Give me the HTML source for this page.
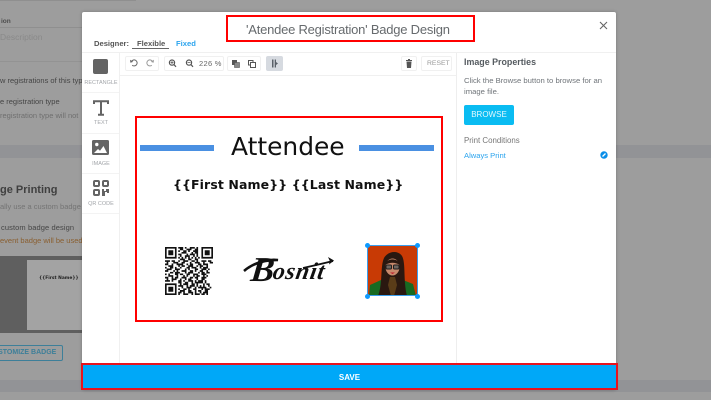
<!DOCTYPE html>
<html><head><meta charset="utf-8">
<style>
*{box-sizing:border-box;margin:0;padding:0}
html,body{width:711px;height:400px;overflow:hidden;background:#9d9d9d;font-family:"Liberation Sans",sans-serif}
.a{position:absolute;white-space:nowrap}
.lbl{font-size:5.5px;color:#a3a6aa;text-align:center;width:38px;left:82px}
.tb{position:absolute;top:56px;height:15px;border:1px solid #f0f0f0;border-radius:2px;background:#fff}
</style></head>
<body>
<div style="position:relative;width:711px;height:400px;overflow:hidden">
<!-- background page -->
<div class="a" style="left:0;top:0;width:136px;height:1px;background:#8f8f8f"></div>
<div class="a" style="left:0;top:27px;width:82px;height:1px;background:#8f8f8f"></div>
<div class="a" style="left:0;top:61px;width:82px;height:1px;background:#939393"></div>
<div class="a" style="left:1px;top:18px;font-size:6.5px;font-weight:bold;color:#4c4c4c">ion</div>
<div class="a" style="left:0;top:32px;font-size:8.5px;color:#8a8a8a">Description</div>
<div class="a" style="left:0;top:76px;font-size:7.5px;color:#454545">w registrations of this type</div>
<div class="a" style="left:0;top:97px;font-size:7.5px;color:#454545">e registration type</div>
<div class="a" style="left:0;top:111px;font-size:7.5px;color:#6f6f6f">registration type will not</div>
<div class="a" style="left:0;top:145px;width:711px;height:13px;background:#929396"></div>
<div class="a" style="left:0;top:380px;width:711px;height:12px;background:#929396"></div>
<div class="a" style="left:0;top:184px;font-size:11px;font-weight:bold;color:#3f3f3f">ge Printing</div>
<div class="a" style="left:0;top:202px;font-size:7.5px;color:#747474">ally use a custom badge</div>
<div class="a" style="left:1px;top:223px;font-size:7.5px;letter-spacing:.1px;color:#454545">custom badge design</div>
<div class="a" style="left:0;top:236px;font-size:7.5px;color:#8a5f30">event badge will be used</div>
<div class="a" style="left:0;top:256px;width:82px;height:77px;background:#5f5f5f"></div>
<div class="a" style="left:27px;top:260px;width:55px;height:70px;background:#a3a3a3"></div>
<div class="a" style="left:39px;top:276px;font:bold 4.4px 'DejaVu Sans',sans-serif;color:#222">{{First Name}}</div>
<div class="a" style="left:-8px;top:345px;width:71px;height:16px;border:1px solid #3d7f99;border-radius:2px"></div>
<div class="a" style="left:-12px;top:349px;color:#3d7f99;font-size:7px;font-weight:bold">CUSTOMIZE BADGE</div>

<!-- modal -->
<div class="a" style="left:82px;top:12px;width:534px;height:378px;background:#fff;border-radius:2px;box-shadow:0 0 3px rgba(0,0,0,.25)"></div>
<div class="a" style="left:82px;top:52px;width:534px;height:1px;background:#f0f0f0"></div>
<svg class="a" style="left:240px;top:18px" width="220" height="22" viewBox="0 0 220 22"><text x="6" y="16" font-family="Liberation Sans, sans-serif" font-size="13" fill="#666a6d" textLength="204" lengthAdjust="spacing">'Atendee Registration' Badge Design</text></svg>
<svg class="a" style="left:599px;top:21px" width="9" height="9" viewBox="0 0 9 9"><path d="M1 1l7 7M8 1L1 8" stroke="#666" stroke-width="1.1"/></svg>
<div class="a" style="left:94px;top:38.5px;font-size:7.6px;font-weight:bold;color:#555">Designer:</div>
<div class="a" style="left:137px;top:38.5px;font-size:7.6px;font-weight:bold;color:#555">Flexible</div>
<div class="a" style="left:132px;top:48px;width:37px;height:1px;background:#666"></div>
<div class="a" style="left:176px;top:38.5px;font-size:7.6px;font-weight:bold;color:#2ba4ee">Fixed</div>

<!-- left tool column -->
<div class="a" style="left:119px;top:53px;width:1px;height:310px;background:#f0f0f0"></div>
<div class="a" style="left:82px;top:92px;width:37px;height:1px;background:#f3f3f3"></div>
<div class="a" style="left:82px;top:133px;width:37px;height:1px;background:#f3f3f3"></div>
<div class="a" style="left:82px;top:173px;width:37px;height:1px;background:#f3f3f3"></div>
<div class="a" style="left:82px;top:213px;width:37px;height:1px;background:#f3f3f3"></div>
<div class="a" style="left:93px;top:59px;width:15px;height:15px;background:#646464;border-radius:2px"></div>
<div class="a lbl" style="top:80px">RECTANGLE</div>
<svg class="a" style="left:93px;top:100px" width="16" height="16" viewBox="0 0 16 16"><path d="M1 4V1.2h14V4M8 1.2V14.5M5 14.8h6" fill="none" stroke="#646464" stroke-width="2"/></svg>
<div class="a lbl" style="top:120px">TEXT</div>
<svg class="a" style="left:92px;top:140px" width="17" height="15" viewBox="0 0 17 15"><rect width="17" height="15" rx="1.5" fill="#646464"/><circle cx="4.8" cy="4.5" r="1.7" fill="#fff"/><path d="M2 13l4-4 2 1.8L11.5 6 15 13z" fill="#fff"/></svg>
<div class="a lbl" style="top:160.5px">IMAGE</div>
<svg class="a" style="left:93px;top:180px" width="16" height="16" viewBox="0 0 16 16"><g fill="none" stroke="#646464" stroke-width="2"><rect x="1" y="1" width="5" height="5" rx="1"/><rect x="10" y="1" width="5" height="5" rx="1"/><rect x="1" y="10" width="5" height="5" rx="1"/></g><path d="M9 9h2v2h2V9h3v4h-2v-1h-2v4H9z" fill="#646464"/></svg>
<div class="a lbl" style="top:200.5px">QR CODE</div>

<!-- toolbar -->
<div class="a" style="left:120px;top:75px;width:336px;height:1px;background:#f0f0f0"></div>
<div class="a" style="left:456px;top:53px;width:1px;height:310px;background:#eee"></div>
<div class="tb" style="left:125px;width:34px"></div>
<div class="tb" style="left:164px;width:60px"></div>
<div class="tb" style="left:227px;width:34px"></div>
<svg class="a" style="left:129px;top:59px" width="26" height="9" viewBox="0 0 26 9"><path d="M2.5 2.5a3 3 0 1 1 .7 3.7" fill="none" stroke="#666" stroke-width="1"/><path d="M1 .8l.4 3 2.8-.9z" fill="#666"/><path d="M23.5 2.5a3 3 0 1 0-.7 3.7" fill="none" stroke="#999" stroke-width="1"/><path d="M25 .8l-.4 3-2.8-.9z" fill="#999"/></svg>
<svg class="a" style="left:168px;top:59px" width="26" height="9" viewBox="0 0 26 9"><g fill="none" stroke="#555" stroke-width="1.2"><circle cx="4" cy="3.6" r="2.6"/><path d="M6 5.6L8 7.8"/><circle cx="21" cy="3.6" r="2.6"/><path d="M23 5.6L25 7.8"/></g><path d="M2.5 3.6h3M4 2.1v3M19.5 3.6h3" stroke="#555" stroke-width=".8"/></svg>
<div class="a" style="left:199px;top:59px;font-size:7.5px;color:#666;letter-spacing:.3px">226 %</div>
<svg class="a" style="left:232px;top:60px" width="24" height="8" viewBox="0 0 24 8"><rect x="0" y="0" width="5" height="5" fill="#555"/><rect x="2.5" y="2.5" width="5" height="5" fill="#888" stroke="#555" stroke-width=".6"/><rect x="16.5" y="0.5" width="4.5" height="4.5" fill="#fff" stroke="#555"/><rect x="18.5" y="2.5" width="5" height="5" fill="#fff" stroke="#555"/></svg>
<div class="a" style="left:266px;top:56px;width:17px;height:15px;background:#d6dae0;border-radius:2px"></div>
<svg class="a" style="left:271px;top:59px" width="7" height="9" viewBox="0 0 7 9"><path d="M1 .5h1.5v8H1zM3.7 .5H5v8H3.7zM5 3l2 1.5L5 6z" fill="#5a6068"/></svg>
<div class="tb" style="left:401px;width:16px"></div>
<div class="tb" style="left:421px;width:31px"></div>
<svg class="a" style="left:405px;top:59px" width="8" height="9" viewBox="0 0 8 9"><path d="M1 1h6v1H1zM3 0h2v1H3zM1.5 2.5h5L6 9H2z" fill="#555"/></svg>
<div class="a" style="left:427px;top:59.5px;font-size:6.8px;color:#9a9a9a">RESET</div>

<!-- right panel -->
<div class="a" style="left:464px;top:57px;font-size:8.9px;font-weight:bold;color:#555b60">Image Properties</div>
<div class="a" style="left:464px;top:74.5px;font-size:7.7px;line-height:11.5px;color:#70757a">Click the Browse button to browse for an<br>image file.</div>
<div class="a" style="left:464px;top:105px;width:50px;height:20px;background:#0abcf2;border-radius:2px;color:#e3f8fe;font-size:8px;line-height:20px;text-align:center">BROWSE</div>
<div class="a" style="left:464px;top:136px;font-size:7.9px;color:#777">Print Conditions</div>
<div class="a" style="left:464px;top:151px;font-size:7.6px;color:#2ba4ee">Always Print</div>
<svg class="a" style="left:600px;top:151px" width="8" height="8" viewBox="0 0 8 8"><circle cx="4" cy="4" r="3.7" fill="#0a8ee8"/><path d="M2.5 5.5l3-3" stroke="#fff" stroke-width="1.3"/></svg>

<!-- badge -->
<div class="a" style="left:135px;top:116px;width:308px;height:206px;border:2px solid #f00"></div>
<div class="a" style="left:140px;top:145px;width:74px;height:6px;background:#4a90e2"></div>
<div class="a" style="left:359px;top:145px;width:75px;height:6px;background:#4a90e2"></div>
<div class="a" style="left:231px;top:132px;font:24.9px 'DejaVu Sans',sans-serif;color:#111">Attendee</div>
<div class="a" style="left:173px;top:177px;font:bold 12.5px 'DejaVu Sans',sans-serif;color:#111;letter-spacing:.11px">{{First Name}} {{Last Name}}</div>

<!-- QR -->
<svg class="a" style="left:165px;top:247px;filter:blur(.25px)" width="48" height="48" viewBox="0 0 29 29">
<path fill="#111" fill-rule="evenodd" d="M0 0h7v7H0zM1 1v5h5V1zM22 0h7v7h-7zM23 1v5h5V1zM0 22h7v7H0zM1 23v5h5v-5z"/>
<path fill="#111" d="M2 2h3v3H2zM24 2h3v3h-3zM2 24h3v3H2z"/>
<path fill="none" stroke="#111" stroke-width="1" d="M8 .5h3m1 0h1m2 0h3m1 0h1M9 1.5h2m2 0h3m2 0h2M8 2.5h1m2 0h2m1 0h1m2 0h3M10 3.5h3m3 0h1m1 0h2M8 4.5h2m3 0h1m1 0h3m1 0h1M9 5.5h1m2 0h3m2 0h1m1 0h1M8 6.5h1m1 0h1m1 0h1m1 0h1m1 0h1m1 0h1m1 0h1M9 7.5h3m2 0h2m2 0h2M0 8.5h3m1 0h2m2 0h1m2 0h3m2 0h2m1 0h1m2 0h3m1 0h2M1 9.5h1m3 0h3m2 0h2m3 0h1m2 0h3m2 0h1m3 0h2M0 10.5h2m2 0h1m2 0h4m2 0h1m1 0h2m3 0h2m1 0h3M2 11.5h3m3 0h1m1 0h2m2 0h3m2 0h1m1 0h2m2 0h1M0 12.5h1m2 0h2m1 0h1m2 0h1m3 0h2m1 0h3m2 0h1m1 0h3M1 13.5h3m2 0h3m3 0h1m1 0h1m3 0h2m2 0h3m1 0h1M0 14.5h2m3 0h1m1 0h1m2 0h3m2 0h2m1 0h1m2 0h2m2 0h1M3 15.5h2m1 0h3m3 0h1m1 0h3m3 0h1m1 0h2m1 0h2M0 16.5h1m1 0h1m3 0h2m1 0h2m2 0h2m2 0h3m2 0h3M2 17.5h3m2 0h1m3 0h1m1 0h1m3 0h1m1 0h2m2 0h1m1 0h1M0 18.5h2m2 0h1m1 0h2m2 0h3m2 0h2m1 0h2m2 0h3M1 19.5h1m2 0h3m2 0h1m2 0h1m1 0h2m3 0h1m2 0h2M0 20.5h3m1 0h1m3 0h2m1 0h1m2 0h3m1 0h1m1 0h3m1 0h1M8 21.5h2m2 0h2m2 0h1m1 0h5m1 0h1M9 22.5h1m1 0h3m2 0h2m1 0h1m3 0h1m1 0h2M8 23.5h3m2 0h1m1 0h3m1 0h1m1 0h1m1 0h1m2 0h1M10 24.5h1m2 0h3m2 0h1m1 0h5m2 0h1M8 25.5h1m2 0h2m1 0h1m2 0h2m3 0h1m1 0h3M9 26.5h3m2 0h2m2 0h1m1 0h2m2 0h2M8 27.5h2m1 0h1m2 0h3m1 0h1m2 0h1m1 0h3M8 28.5h1m2 0h3m2 0h1m1 0h3m1 0h2m1 0h1"/>
</svg>

<!-- logo -->
<div class="a" style="left:251px;top:250px;font:italic bold 35px 'Liberation Serif',serif;color:#111;transform:skewX(-6deg)">B</div>
<div class="a" style="left:273px;top:259px;font:italic bold 24px 'Liberation Serif',serif;color:#111;letter-spacing:.8px;transform:skewX(-10deg)">osnit</div>
<svg class="a" style="left:236px;top:248px" width="106" height="46" viewBox="0 0 106 46"><path d="M8 23C16 16 27 12 42 12c-8-1-20 1-30 8" fill="none" stroke="#111" stroke-width="2.5"/><path d="M67 20c9-2 18-4 30-7" fill="none" stroke="#111" stroke-width="1.8"/><path d="M92 9l6 3.5-5 4 .8-3.5z" fill="#111"/></svg>

<!-- photo -->
<svg class="a" style="left:367px;top:245px" width="51" height="51" viewBox="0 0 51 51">
<rect width="51" height="51" fill="#c83a05"/>
<path d="M2 51l1-11 11-5 22 0 10 4 3 12z" fill="#176a22"/>
<path d="M11 51C16 38 13 22 17 13 21 6 31 5 35 11c4 7 1 24 5 40z" fill="#2a1810"/>
<path d="M23 32h5l2 8-3 11h-3l-3-11z" fill="#5a3c18"/>
<ellipse cx="25.5" cy="22" rx="7" ry="8.5" fill="#c88a6c"/>
<path d="M18 20c1-7 13-8 15 0-5-3-10-3-15 0z" fill="#2a1810"/>
<g fill="#6f6660" stroke="#1e1e1e" stroke-width="1"><rect x="19" y="20" width="5.5" height="4" rx="1"/><rect x="26.5" y="20" width="5.5" height="4" rx="1"/></g>
<path d="M23 27.5h5l-2.5 1.5z" fill="#c0182a"/>
</svg>
<div class="a" style="left:367px;top:245px;width:51px;height:51px;border:1px solid #3b9fee"></div>
<div class="a" style="left:365px;top:243px;width:5px;height:5px;border-radius:50%;background:#0d9aff"></div>
<div class="a" style="left:415px;top:243px;width:5px;height:5px;border-radius:50%;background:#0d9aff"></div>
<div class="a" style="left:365px;top:294px;width:5px;height:5px;border-radius:50%;background:#0d9aff"></div>
<div class="a" style="left:415px;top:294px;width:5px;height:5px;border-radius:50%;background:#0d9aff"></div>

<!-- title highlight -->
<div class="a" style="left:226px;top:15px;width:249px;height:27px;border:2px solid #f00"></div>

<!-- save -->
<div class="a" style="left:81px;top:363px;width:537px;height:27px;background:#00a8f8;border:2px solid #e8131d;color:#fff;font-size:8px;font-weight:bold;line-height:25px;text-align:center">SAVE</div>
</div>
</body></html>
